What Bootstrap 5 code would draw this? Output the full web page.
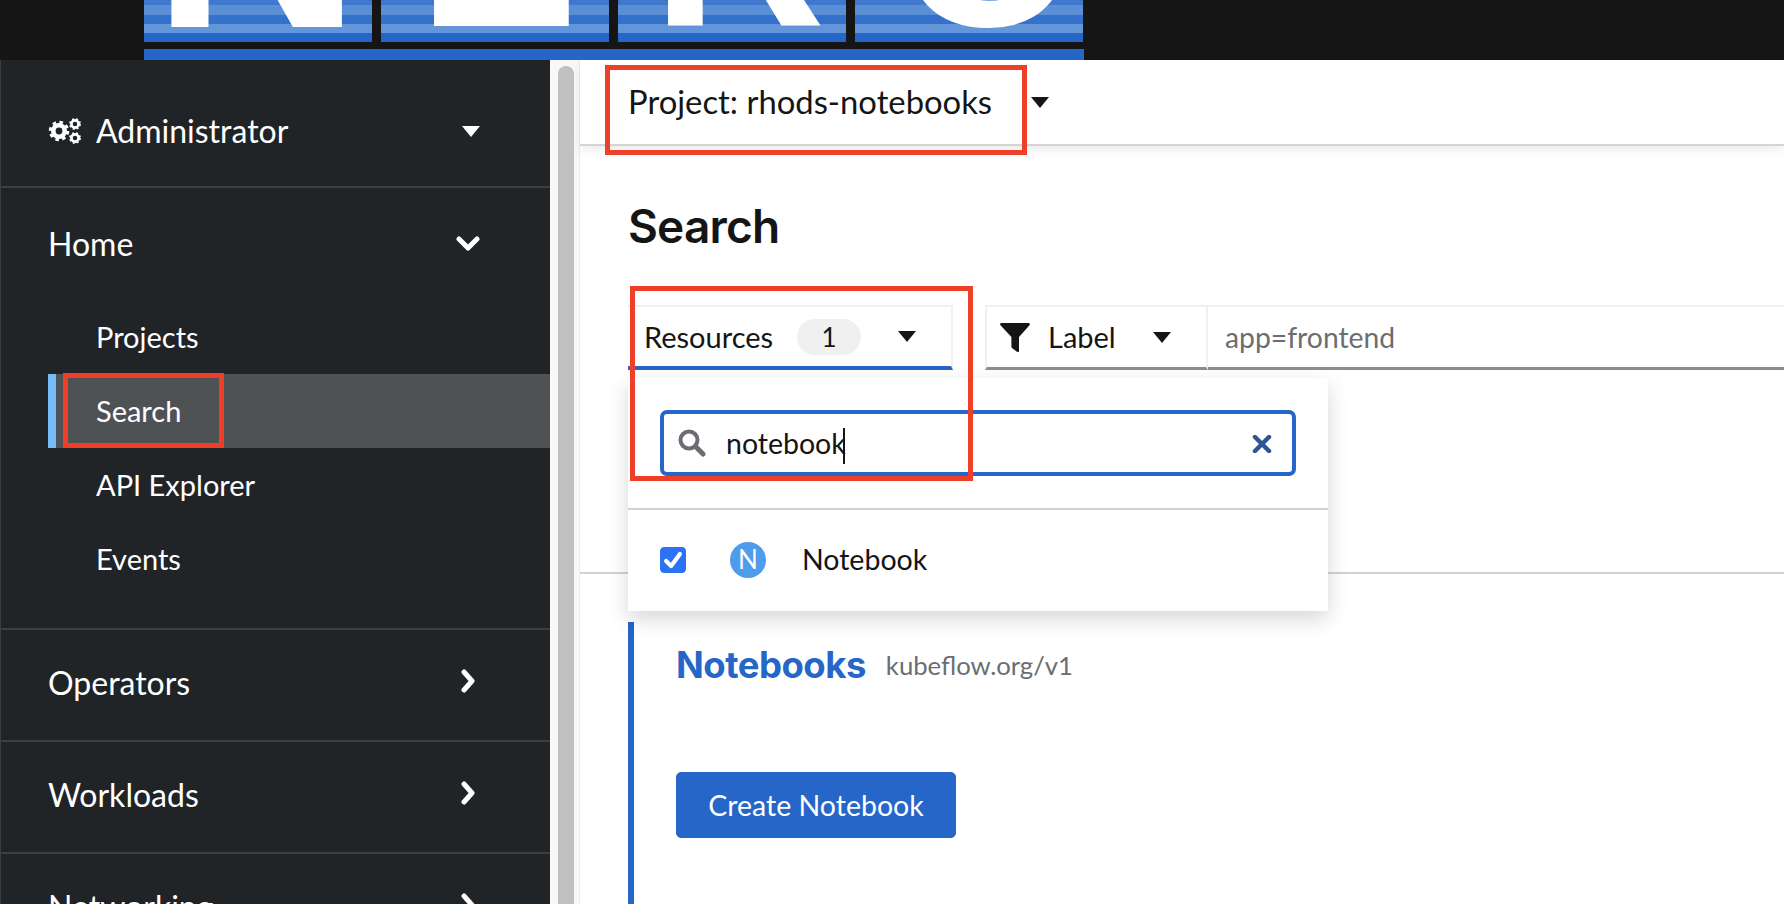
<!DOCTYPE html>
<html lang="en">
<head>
  <meta charset="UTF-8" />
  <meta name="viewport" content="width=device-width, initial-scale=1.0" />
  <title>Search - Project rhods-notebooks</title>

  <!-- Bootstrap CSS -->
  <link href="https://cdn.jsdelivr.net/npm/bootstrap@5.3.3/dist/css/bootstrap.min.css" rel="stylesheet" />
  <style>
    html, body { height: 904px; overflow: hidden; }
    body { position: relative; font-family: "Lato", "Liberation Sans", sans-serif; font-size: 29px; color: #151515; background: #fff; }

    /* top banner */
    .top-banner { height: 60px; background: #151515; padding-left: 144px; }
    .logo-wrap { width: 940px; height: 60px; background: #2566c8; }
    .logo-tiles { height: 49px; background: #151515; gap: 9px; }
    .logo-tile { height: 42px; width: 228px; flex: none; overflow: hidden; color: #fff; font-family: "Liberation Sans", sans-serif; font-weight: 700; font-size: 240px; line-height: 1;
      background: linear-gradient(#3f78cc 0 5px, #5a8fd6 5px 15px, #3371cb 15px 24px, #6396d9 24px 33px, #2566c8 33px 42px); }
    .logo-tile span { display: block; margin-top: -177px; }
    .tile-n { padding-left: 8px; font-size: 290px; }
    .tile-n span { margin-top: -219px; }
    .tile-e { padding-left: 37px; }
    .tile-r { padding-left: 34px; }
    .tile-c { padding-left: 41px; }

    /* left nav */
    .app-shell { height: 844px; }
    .side-nav { width: 550px; flex: none; background: #212427; color: #fff; border-left: 1px solid #3c3f42; overflow: hidden; }
    .nav-group { border-bottom: 2px solid #3c3f42; }
    .nav-head { height: 110px; padding: 0 74px 4px 47px; font-size: 32px; color: #fff; }
    .nav-head .chevron-right { margin-bottom: 4px; }
    .nav-head.persp { height: 126px; padding: 16px 70px 0 47px; }
    .nav-head.open-head { height: 112px; padding: 0 70px 0 47px; }
    .gear-icon { margin-right: 12px; }
    .nav-sub { padding-bottom: 32px; }
    .side-nav .nav-link { height: 74px; display: flex; align-items: center; color: #fff; font-size: 29px; margin-left: 47px; padding: 0 0 0 48px; }
    .side-nav .nav-link.active { background: #4f5255; border-left: 8px solid #73bcf7; padding-left: 40px; }
    .tri-down { display: block; width: 0; height: 0; border-left: 9.500px solid transparent; border-right: 9.500px solid transparent; border-top: 11px solid #151515; }
    .tri-light { border-top-color: #fff; }

    /* fake scrollbar */
    .nav-scroll { width: 30px; flex: none; background: #f8f8f8; padding: 6px 0 0 8px; border-right: 1px solid #ececec; }
    .scroll-thumb { width: 16px; height: 100%; background: #c1c1c1; border-radius: 8px 8px 0 0; }

    /* main */
    .main-area { min-width: 0; }
    .project-bar { height: 84px; padding-left: 48px; font-size: 32.800px; box-shadow: 0 2px 0 #d4d4d4, 0 6px 10px rgba(3, 3, 3, .08); position: relative; }
    .project-bar .tri-down { margin-left: 39px; }
    .page-title { margin: 52px 0 49px 48px; font-family: "Inter", "Liberation Sans", sans-serif; font-size: 46px; font-weight: 600; line-height: 60px; letter-spacing: -.8px; }
    .tool-row { margin-left: 48px; height: 65px; position: relative; }
    .tool-box { height: 65px; border-top: 2px solid #f0f0f0; border-right: 2px solid #f0f0f0; border-bottom: 3px solid #8a8d90; }
    .resource-box { width: 325px; padding-left: 16px; border-bottom: 4px solid #2566c8; margin-right: 32px; }
    .count-pill { width: 64px; height: 36px; margin-left: 24px; margin-right: 37px; display: flex; align-items: center; justify-content: center; background: #f0f0f0; color: #151515; font-size: 26px; font-weight: 400; }
    .label-box { width: 223px; border-left: 2px solid #f0f0f0; padding-left: 13px; }
    .label-box svg { margin-right: 18px; }
    .label-box .tri-down { margin-left: 37px; }
    .filter-input { flex: 1; height: 65px; border-radius: 0; border: 0; border-top: 2px solid #f0f0f0; border-bottom: 3px solid #8a8d90; padding-left: 17px; font-size: 28.300px; color: #151515; background: #fff; box-shadow: none; }
    .filter-input::placeholder { color: #6a6e73; opacity: 1; }

    /* resources dropdown */
    .resource-menu { display: block; top: 73px; left: 0; width: 700px; height: 233px; padding: 0; margin: 0; border: 0; border-radius: 0; font-size: 28.500px; color: #151515; box-shadow: 0 8px 20px rgba(3, 3, 3, .16); }
    .menu-search-wrap { height: 132px; padding: 32px 32px 0; border-bottom: 2px solid #d2d2d2; }
    .menu-search { height: 66px; border: 4px solid #2566c8; border-radius: 7px; padding: 0 14px; }
    .menu-search svg.lens { margin-right: 20px; }
    .clear-icon { margin-right: 6px; margin-top: 2px; }
    .text-cursor { display: inline-block; width: 2px; height: 36px; background: #151515; vertical-align: middle; margin-left: -3px; }
    .menu-row { height: 99px; padding-left: 32px; }
    .menu-row .form-check-input { width: 26px; height: 26px; margin: 0; border-radius: 4px; background-color: #2b72f5; border-color: #2b72f5;
      background-image: url("data:image/svg+xml,%3csvg xmlns='http://www.w3.org/2000/svg' viewBox='0 0 26 26'%3e%3cpath d='M5.500 14l5.500 5.500L20.500 6.500' fill='none' stroke='%23fff' stroke-width='4.500' stroke-linecap='round' stroke-linejoin='round'/%3e%3c/svg%3e"); }
    .kind-dot { width: 36px; height: 36px; margin: 0 36px 0 44px; background: #4f9bec; color: #fff; font-size: 26px; font-weight: 400; }

    /* notebooks section */
    .page-rule { height: 2px; margin-top: 202px; background: #d2d2d2; }
    .list-section { margin: 48px 0 0 48px; border-left: 6px solid #2566c8; padding: 20px 0 0 42px; height: 300px; }
    .section-title { font-family: "Inter", "Liberation Sans", sans-serif; font-size: 36.500px; font-weight: 700; line-height: 46px; color: #2566c8; letter-spacing: -.5px; margin: 0; }
    .section-group { margin-left: 20px; color: #6a6e73; font-size: 25.700px; font-weight: 400; }
    .create-btn { display: block; margin-top: 84px; width: 280px; height: 66px; padding: 0; border-radius: 5px; background: #2566c8; border-color: #2566c8; font-size: 28.500px; }

    /* red annotation boxes */
    .callout { position: absolute; border: 5px solid #ee4028; z-index: 2000; pointer-events: none; }
    .callout-project { left: 605px; top: 65px; width: 422px; height: 90px; }
    .callout-search { left: 63px; top: 373px; width: 161px; height: 75px; }
    .callout-resources { left: 630px; top: 286px; width: 343px; height: 195px; }
  </style>
</head>
<body>
  <div class="top-banner">
    <div class="logo-wrap">
      <div class="logo-tiles d-flex">
        <div class="logo-tile tile-n"><span>N</span></div>
        <div class="logo-tile tile-e"><span>E</span></div>
        <div class="logo-tile tile-r"><span>R</span></div>
        <div class="logo-tile tile-c"><span>C</span></div>
      </div>
    </div>
  </div>

  <div class="app-shell d-flex">
    <aside class="side-nav">
      <div class="nav-group">
        <div class="nav-head persp d-flex align-items-center">
          <svg width="36" height="28" viewBox="0 0 36 28" class="gear-icon flex-shrink-0">
            <circle cx="11" cy="14" r="8" fill="#fff" />
            <circle cx="11" cy="14" r="8.500" fill="none" stroke="#fff" stroke-width="3.500" stroke-dasharray="3.400 3.300" />
            <circle cx="11" cy="14" r="3.400" fill="#212427" />
            <circle cx="27" cy="7" r="3.600" fill="none" stroke="#fff" stroke-width="2.600" />
            <circle cx="27" cy="7" r="5" fill="none" stroke="#fff" stroke-width="1.800" stroke-dasharray="2 2" />
            <circle cx="27" cy="21" r="3.600" fill="none" stroke="#fff" stroke-width="2.600" />
            <circle cx="27" cy="21" r="5" fill="none" stroke="#fff" stroke-width="1.800" stroke-dasharray="2 2" />
          </svg>
          <span>Administrator</span>
          <span class="tri-down tri-light ms-auto"></span>
        </div>
      </div>
      <div class="nav-group">
        <div class="nav-head open-head d-flex align-items-center">
          <span>Home</span>
          <svg class="ms-auto" width="24" height="16" viewBox="0 0 24 16"><polyline points="3,3 12,12 21,3" fill="none" stroke="#fff" stroke-width="5" stroke-linecap="round" stroke-linejoin="round" /></svg>
        </div>
        <nav class="nav flex-column nav-sub">
          <a class="nav-link" href="#">Projects</a>
          <a class="nav-link active" href="#">Search</a>
          <a class="nav-link" href="#">API Explorer</a>
          <a class="nav-link" href="#">Events</a>
        </nav>
      </div>
      <div class="nav-group">
        <div class="nav-head d-flex align-items-center">
          <span>Operators</span>
          <svg class="chevron-right ms-auto" width="16" height="24" viewBox="0 0 16 24"><polyline points="4,3 12,12 4,21" fill="none" stroke="#fff" stroke-width="5" stroke-linecap="round" stroke-linejoin="round" /></svg>
        </div>
      </div>
      <div class="nav-group">
        <div class="nav-head d-flex align-items-center">
          <span>Workloads</span>
          <svg class="chevron-right ms-auto" width="16" height="24" viewBox="0 0 16 24"><polyline points="4,3 12,12 4,21" fill="none" stroke="#fff" stroke-width="5" stroke-linecap="round" stroke-linejoin="round" /></svg>
        </div>
      </div>
      <div class="nav-group">
        <div class="nav-head d-flex align-items-center">
          <span>Networking</span>
          <svg class="chevron-right ms-auto" width="16" height="24" viewBox="0 0 16 24"><polyline points="4,3 12,12 4,21" fill="none" stroke="#fff" stroke-width="5" stroke-linecap="round" stroke-linejoin="round" /></svg>
        </div>
      </div>
    </aside>

    <div class="nav-scroll"><div class="scroll-thumb"></div></div>

    <main class="main-area flex-grow-1">
      <div class="project-bar d-flex align-items-center">
        <span>Project: rhods-notebooks</span>
        <span class="tri-down"></span>
      </div>

      <h1 class="page-title">Search</h1>

      <div class="tool-row d-flex">
        <div class="tool-box resource-box d-flex align-items-center">
          <span>Resources</span>
          <span class="badge rounded-pill count-pill">1</span>
          <span class="tri-down"></span>
        </div>
        <div class="tool-box label-box d-flex align-items-center">
          <svg width="30" height="29" viewBox="0 0 30 29"><path d="M1.500 0h27c1.200 0 1.800 1.300 1 2.200L19 14v14c0 1-1 1.400-1.700.9l-5.300-4c-.4-.3-.6-.7-.6-1.200V14L.5 2.200C-.3 1.300.3 0 1.500 0z" fill="#151515" /></svg>
          <span>Label</span>
          <span class="tri-down"></span>
        </div>
        <input class="form-control filter-input" type="text" placeholder="app=frontend" />

        <div class="dropdown-menu show resource-menu">
          <div class="menu-search-wrap">
            <div class="menu-search d-flex align-items-center">
              <svg class="lens flex-shrink-0" width="28" height="28" viewBox="0 0 28 28"><circle cx="11" cy="11" r="8.500" fill="none" stroke="#6a6e73" stroke-width="4" /><line x1="18" y1="18" x2="25" y2="25" stroke="#6a6e73" stroke-width="5" stroke-linecap="round" /></svg>
              <span>notebook<span class="text-cursor"></span></span>
              <svg class="clear-icon ms-auto flex-shrink-0" width="20" height="18" viewBox="0 0 20 18"><path d="M3 2 17 16M17 2 3 16" fill="none" stroke="#2f5597" stroke-width="4.500" stroke-linecap="round" /></svg>
            </div>
          </div>
          <div class="menu-row d-flex align-items-center">
            <input class="form-check-input" type="checkbox" checked />
            <span class="kind-dot rounded-circle d-flex align-items-center justify-content-center">N</span>
            <span>Notebook</span>
          </div>
        </div>
      </div>

      <div class="page-rule"></div>

      <section class="list-section">
        <div class="d-flex align-items-center">
          <h2 class="section-title">Notebooks</h2>
          <span class="section-group">kubeflow.org/v1</span>
        </div>
        <button type="button" class="btn btn-primary create-btn">Create Notebook</button>
      </section>
    </main>
  </div>

  <div class="callout callout-project"></div>
  <div class="callout callout-search"></div>
  <div class="callout callout-resources"></div>

  <!-- Bootstrap JS Bundle -->
  <script src="https://cdn.jsdelivr.net/npm/bootstrap@5.3.3/dist/js/bootstrap.bundle.min.js"></script>
</body>
</html>
